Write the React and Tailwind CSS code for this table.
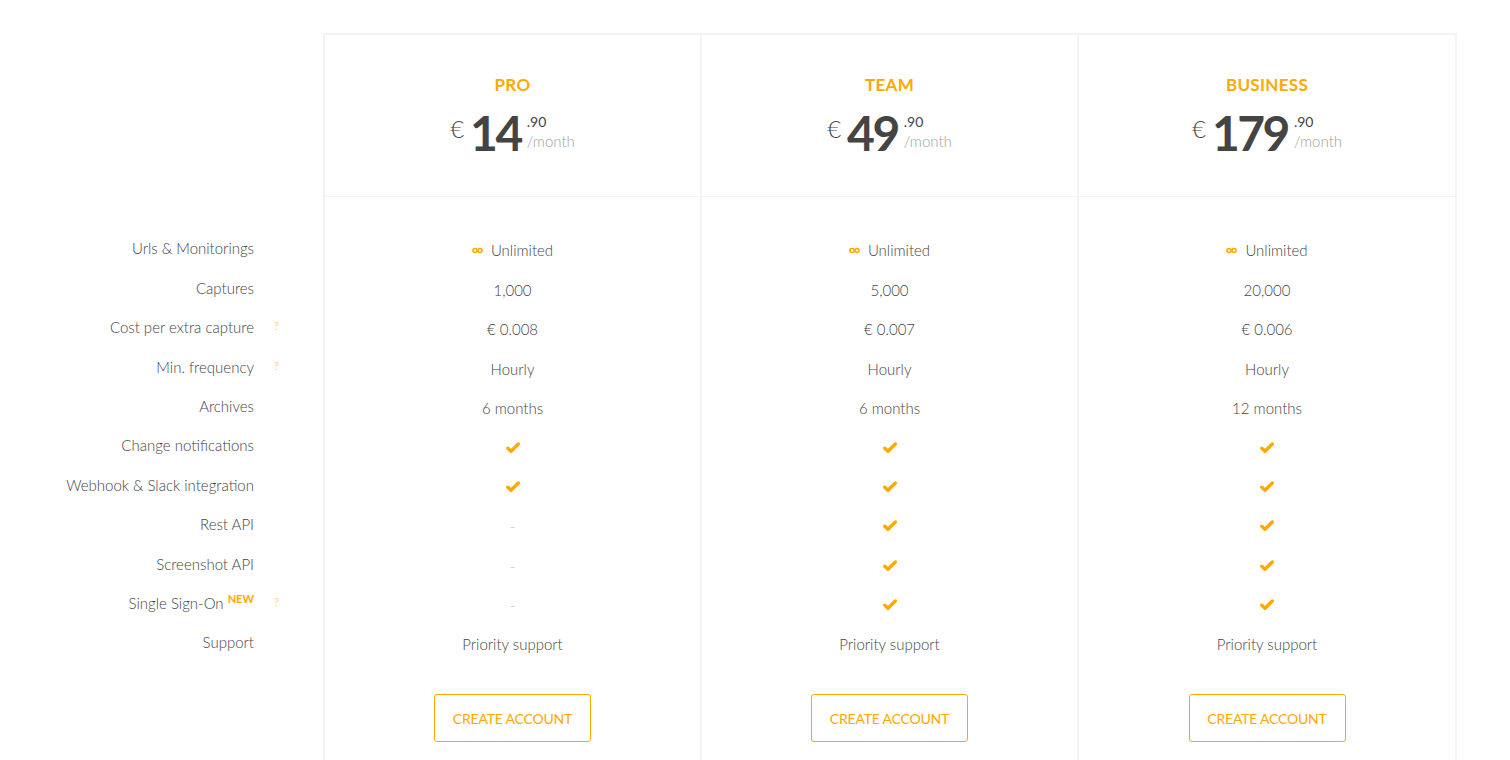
const ORANGE = "text-[#ffa800]";

const LABELS = [
  { t: "Urls & Monitorings" },
  { t: "Captures" },
  { t: "Cost per extra capture", help: true },
  { t: "Min. frequency", help: true },
  { t: "Archives" },
  { t: "Change notifications" },
  { t: "Webhook & Slack integration" },
  { t: "Rest API" },
  { t: "Screenshot API" },
  { t: "Single Sign-On", help: true, isNew: true },
  { t: "Support" },
];

const PLANS = [
  { name: "PRO", price: "14", vals: ["inf", "1,000", "€ 0.008", "Hourly", "6 months", "ok", "ok", "-", "-", "-", "Priority support"] },
  { name: "TEAM", price: "49", vals: ["inf", "5,000", "€ 0.007", "Hourly", "6 months", "ok", "ok", "ok", "ok", "ok", "Priority support"] },
  { name: "BUSINESS", price: "179", vals: ["inf", "20,000", "€ 0.006", "Hourly", "12 months", "ok", "ok", "ok", "ok", "ok", "Priority support"] },
];

function Check() {
  return (
    <svg width="14" height="12" viewBox="0 0 14 12">
      <path d="M1.8 6.2 L5 9.2 L12.3 2" fill="none" stroke="#ffa800" strokeWidth="3.4" strokeLinecap="round" strokeLinejoin="round" />
    </svg>
  );
}

function Infinity() {
  return (
    <svg width="11" height="7" viewBox="0 0 11 7" className="mr-2">
      <circle cx="3" cy="3.5" r="2" fill="none" stroke="#ffa800" strokeWidth="1.6" />
      <circle cx="8" cy="3.5" r="2" fill="none" stroke="#ffa800" strokeWidth="1.6" />
    </svg>
  );
}

function Cell({ v }) {
  if (v === "ok") return <Check />;
  if (v === "-") return <span className="text-[#bbb]">-</span>;
  if (v === "inf")
    return (
      <span className="flex items-center">
        <Infinity />
        Unlimited
      </span>
    );
  return <span>{v}</span>;
}

function Plan({ plan, last }) {
  return (
    <div className={"border-l-2 border-[#f3f3f3] flex flex-col " + (last ? "border-r-2 w-[380px]" : "w-[377px]")}>
      <div className="h-[162px] border-b border-[#f3f3f3] flex flex-col items-center pt-[41px]">
        <div className={"text-[17px] font-bold leading-none tracking-[0.3px] " + ORANGE}>{plan.name}</div>
        <div className="flex items-start mt-[16px] text-[#444]">
          <span className="text-[24px] font-light leading-none mt-[8px] mr-[6px]">€</span>
          <span className="text-[48px] font-bold leading-none tracking-[-2.5px]">{plan.price}</span>
          <span className="flex flex-col ml-[6px] leading-none">
            <span className="mt-[6px] text-[14px] text-[#444]">.90</span>
            <span className="mt-[5px] text-[15px] font-light text-[#a0a0a0]">/month</span>
          </span>
        </div>
      </div>
      <div className="pt-[34px] flex flex-col text-[15px] font-light text-[#444]">
        {plan.vals.map((v, i) => (
          <div key={i} className="h-[39.4px] flex items-center justify-center">
            <Cell v={v} />
          </div>
        ))}
      </div>
      <div className="flex justify-center pt-[30px] pb-[20px]">
        <button className={"w-[157px] h-[48px] border border-[#ffa800] rounded-[3px] text-[14px] tracking-[-0.2px] " + ORANGE}>
          CREATE ACCOUNT
        </button>
      </div>
    </div>
  );
}

export default function App() {
  return (
    <div className="bg-white h-[760px] overflow-hidden pt-[33px] font-['Lato',sans-serif]">
      <div className="flex">
        <div className="w-[323px] pt-[196px] flex flex-col text-[15px] font-light text-[#444]">
          {LABELS.map((l) => (
            <div key={l.t} className="h-[39.4px] flex items-center">
              <div className="w-[254px] text-right relative">
                {l.t}
                {l.isNew && (
                  <sup className={"ml-[4px] text-[11px] font-bold " + ORANGE}>NEW</sup>
                )}
              </div>
              {l.help && <span className={"ml-[20px] text-[11px] mt-[-2px] " + ORANGE}>?</span>}
            </div>
          ))}
        </div>
        <div className="flex border-t-2 border-[#f3f3f3] h-[760px]">
          {PLANS.map((p, i) => (
            <Plan key={p.name} plan={p} last={i === 2} />
          ))}
        </div>
      </div>
    </div>
  );
}
